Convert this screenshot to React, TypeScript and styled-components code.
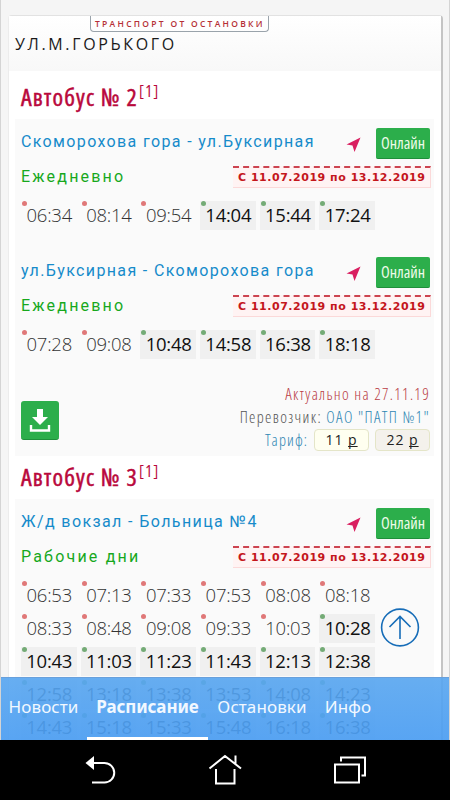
import styled, { createGlobalStyle } from "styled-components";

const GlobalStyle = createGlobalStyle`
  body {
    margin: 0;
    background: #000;
  }

  * {
    box-sizing: border-box;
  }
`;

const Screen = styled.div`
  width: 450px;
  height: 800px;
  overflow: hidden;
  display: flex;
  flex-direction: column;
  font-family: "Open Sans", "Noto Sans", sans-serif;
`;

const Viewport = styled.div`
  position: relative;
  height: 740px;
  overflow: hidden;
  padding: 15px 7px 0 7px;
  background: #f5f5f5;
  border-left: 1px solid #d4d4d4;
  border-right: 1px solid #d4d4d4;
`;

const Card = styled.main`
  width: 435px;
  height: 900px;
  background: #fff;
  border: 1px solid #e2e2e2;
  border-right: 2px solid #c4c4c4;
  border-left-color: #ececec;
  border-radius: 4px;
`;

const StopHeader = styled.header`
  height: 55px;
  display: flex;
  flex-direction: column;
  background: linear-gradient(#fff, #f8f8f8);
`;

const Badge = styled.div`
  align-self: flex-start;
  width: 179px;
  height: 16px;
  margin-left: 81px;
  padding-left: 4px;
  border: 1px solid #9aa3ab;
  border-top: 0;
  border-radius: 0 0 4px 4px;
  color: #b52f35;
  font: 600 8.5px/15px "Open Sans", sans-serif;
  letter-spacing: 2.28px;
  white-space: nowrap;
`;

const StopName = styled.h1`
  margin: 0 0 0 6px;
  font-size: 16px;
  line-height: 24px;
  font-weight: 400;
  letter-spacing: 2.65px;
  color: #1a1a1a;
`;

const RouteTitle = styled.h2<{ $height: number; $shift: number }>`
  height: ${(props) => props.$height}px;
  margin: 0;
  padding: 0 0 0 12px;
  color: #b9083b;
  font-size: 24px;
  line-height: ${(props) => props.$height + props.$shift}px;
  font-weight: 400;
  font-stretch: 75%;
  letter-spacing: 1.2px;
  white-space: nowrap;
  -webkit-text-stroke: 0.5px #b9083b;

  sup {
    margin-left: 1px;
    font-size: 16px;
    line-height: 0;
    vertical-align: 9px;
    -webkit-text-stroke: 0;
  }
`;

const Section = styled.section<{ $height: number }>`
  height: ${(props) => props.$height}px;
  margin: 0 7px 0 6px;
  padding: 9px 4px 0 6px;
  background: #fafafa;
`;

const DirectionRow = styled.div`
  height: 31px;
  display: flex;
  align-items: center;
`;

const Direction = styled.div<{ $spacing: number }>`
  flex: 1;
  padding-bottom: 3px;
  color: #168bca;
  font: 400 16px/24px Roboto, sans-serif;
  letter-spacing: ${(props) => props.$spacing}px;
  white-space: nowrap;
`;

const Arrow = styled.svg`
  width: 15px;
  height: 15px;
  margin: 2px 15px 0 0;
`;

const OnlineButton = styled.button`
  width: 54px;
  height: 31px;
  padding: 0;
  border: 0;
  border-bottom: 1px solid #1e8f3a;
  border-radius: 2px;
  background: #2cae4b;
  color: #effbe9;
  font: 400 16px/30px "Open Sans", sans-serif;
  font-stretch: 75%;
  letter-spacing: 0;
`;

const PeriodRow = styled.div`
  display: flex;
  justify-content: space-between;
  height: 42px;
  padding-top: 7px;
`;

const Days = styled.div<{ $spacing: number }>`
  color: #17a81d;
  font: 400 16px/22px Roboto, sans-serif;
  letter-spacing: ${(props) => props.$spacing}px;
`;

const Period = styled.div`
  width: 198px;
  height: 22px;
  margin-right: -1px;
  padding-left: 5px;
  border: 1px solid #fbd9d9;
  border-left: 0;
  border-top: 2px dashed #cc4450;
  background: #fff3f3;
  color: #c4161c;
  font: 700 11px/19px "DejaVu Sans", sans-serif;
  letter-spacing: 0.52px;
  white-space: nowrap;
`;

const Times = styled.div`
  display: grid;
  grid-template-columns: repeat(6, 55.5px);
  grid-auto-rows: 29px;
  gap: 3.9px 4.2px;
`;

const Time = styled.div<{ $past: boolean }>`
  position: relative;
  padding-left: 1px;
  color: ${(props) => (props.$past ? "#333" : "#111")};
  background: ${(props) => (props.$past ? "transparent" : "#f0f0f0")};
  font-size: 18.5px;
  line-height: 28px;
  font-weight: ${(props) => (props.$past ? 300 : 400)};
  letter-spacing: -0.25px;
  text-align: center;

  &:before {
    content: "";
    position: absolute;
    left: 1px;
    top: 0;
    width: 5px;
    height: 5px;
    border-radius: 50%;
    background: ${(props) => (props.$past ? "#e07878" : "#74ab76")};
  }
`;

const Summary = styled.div`
  height: 80px;
  margin: 0 7px 0 6px;
  padding: 6px 4px 0 6px;
  display: flex;
  justify-content: space-between;
  background: #fafafa;
`;

const DownloadButton = styled.button`
  width: 38px;
  height: 39px;
  margin-top: 19px;
  padding: 0;
  display: grid;
  place-items: center;
  border: 0;
  border-bottom: 1px solid #1e8f3a;
  border-radius: 3px;
  background: #2cae4b;
`;

const Facts = styled.div`
  display: flex;
  flex-direction: column;
  align-items: flex-end;
`;

const Fact = styled.div<{ $color: string; $spacing: number }>`
  height: 23px;
  display: flex;
  align-items: center;
  white-space: pre;
  color: ${(props) => props.$color};
  font-size: 16px;
  font-weight: 300;
  font-stretch: 75%;
  letter-spacing: ${(props) => props.$spacing}px;
`;

const Carrier = styled.span`
  color: #2f87b3;
`;

const Fare = styled.span<{ $background: string }>`
  width: 55px;
  height: 22px;
  margin-left: 6px;
  border: 1px solid #e4e5c8;
  border-radius: 4px;
  background: ${(props) => props.$background};
  color: #222;
  font-size: 14px;
  line-height: 20px;
  font-weight: 400;
  font-stretch: 100%;
  letter-spacing: 1px;
  text-align: center;

  u {
    text-decoration-skip-ink: none;
    text-underline-offset: 1px;
  }
`;

const TopButton = styled.button`
  position: absolute;
  left: 379px;
  top: 608px;
  width: 40px;
  height: 40px;
  padding: 0;
  border: 0;
  background: none;
`;

const Tabs = styled.nav`
  position: absolute;
  left: -1px;
  right: -1px;
  bottom: 0;
  height: 63px;
  display: flex;
  background: linear-gradient(rgba(88, 166, 240, 0.91), rgba(76, 158, 242, 0.93));
  border-top: 1px solid #68a0dc;
`;

const Tab = styled.a<{ $width: number; $active?: boolean }>`
  width: ${(props) => props.$width}px;
  height: 62px;
  border-bottom: 3px solid ${(props) => (props.$active ? "#fff" : "transparent")};
  color: #f2f8ff;
  font: ${(props) => (props.$active ? 700 : 400)} 17px/58px "Noto Sans", sans-serif;
  letter-spacing: ${(props) => (props.$active ? -0.1 : 0.1)}px;
  text-align: center;
  white-space: nowrap;
`;

const SystemBar = styled.footer`
  height: 60px;
  background: #000;

  svg {
    display: block;
  }
`;

type Slot = { time: string; past: boolean };

const slots = (past: string, next: string): Slot[] => [
  ...past.split(" ").map((time) => ({ time, past: true })),
  ...next.split(" ").map((time) => ({ time, past: false })),
];

interface ScheduleProps {
  direction: string;
  directionSpacing: number;
  days: string;
  daysSpacing: number;
  height: number;
  times: Slot[];
}

const Schedule = ({ direction, directionSpacing, days, daysSpacing, height, times }: ScheduleProps) => (
  <Section $height={height}>
    <DirectionRow>
      <Direction $spacing={directionSpacing}>{direction}</Direction>
      <Arrow viewBox="0 0 15 15">
        <path d="M14.500 0.500 L0.500 7.500 L6.500 8.500 L8.500 15 Z" fill="#d91f60" />
      </Arrow>
      <OnlineButton>Онлайн</OnlineButton>
    </DirectionRow>
    <PeriodRow>
      <Days $spacing={daysSpacing}>{days}</Days>
      <Period>С 11.07.2019 по 13.12.2019</Period>
    </PeriodRow>
    <Times>
      {times.map((slot) => (
        <Time key={slot.time} $past={slot.past}>
          {slot.time}
        </Time>
      ))}
    </Times>
  </Section>
);

const App = () => {
  return (
    <Screen>
      <GlobalStyle />
      <Viewport>
        <Card>
          <StopHeader>
            <Badge>ТРАНСПОРТ ОТ ОСТАНОВКИ</Badge>
            <StopName>УЛ.М.ГОРЬКОГО</StopName>
          </StopHeader>
          <RouteTitle $height={48} $shift={4}>
            Автобус № 2<sup>[1]</sup>
          </RouteTitle>
          <Schedule
            direction="Скоморохова гора - ул.Буксирная"
            directionSpacing={1.36}
            days="Ежедневно"
            daysSpacing={2.2}
            height={129}
            times={slots("06:34 08:14 09:54", "14:04 15:44 17:24")}
          />
          <Schedule
            direction="ул.Буксирная - Скоморохова гора"
            directionSpacing={1.36}
            days="Ежедневно"
            daysSpacing={2.2}
            height={128}
            times={slots("07:28 09:08", "10:48 14:58 16:38 18:18")}
          />
          <Summary>
            <DownloadButton>
              <svg width="22" height="24" viewBox="0 0 22 24">
                <path d="M8 1h6v8h5l-8 8-8-8h5z" fill="#fff" />
                <path d="M2 17v5.5h18V17" fill="none" stroke="#fff" strokeWidth="2.4" />
              </svg>
            </DownloadButton>
            <Facts>
              <Fact $color="#b93c45" $spacing={1.3}>Актуально на 27.11.19</Fact>
              <Fact $color="#555" $spacing={1.35}>
                Перевозчик: <Carrier>ОАО "ПАТП №1"</Carrier>
              </Fact>
              <Fact $color="#2f87b3" $spacing={1.1}>
                Тариф:
                <Fare $background="#fffff0">
                  11 <u>р</u>
                </Fare>
                <Fare $background="#f4f1ec">
                  22 <u>р</u>
                </Fare>
              </Fact>
            </Facts>
          </Summary>
          <RouteTitle $height={43} $shift={-1}>
            Автобус № 3<sup>[1]</sup>
          </RouteTitle>
          <Schedule
            direction="Ж/д вокзал - Больница №4"
            directionSpacing={1.4}
            days="Рабочие дни"
            daysSpacing={2.2}
            height={300}
            times={slots(
              "06:53 07:13 07:33 07:53 08:08 08:18 08:33 08:48 09:08 09:33 10:03",
              "10:28 10:43 11:03 11:23 11:43 12:13 12:38 12:58 13:18 13:38 13:53 14:08 14:23 14:43 15:18 15:33 15:48 16:18 16:38"
            )}
          />
        </Card>
        <TopButton>
          <svg width="40" height="40" viewBox="0 0 40 40" fill="none" stroke="#176db8" strokeWidth="1.6">
            <circle cx="20" cy="19.5" r="18.4" />
            <path d="M20 31V9M9.500 19 20 8.500 30.500 19" />
          </svg>
        </TopButton>
        <Tabs>
          <Tab $width={87}>Новости</Tab>
          <Tab $width={121} $active>
            Расписание
          </Tab>
          <Tab $width={108}>Остановки</Tab>
          <Tab $width={64}>Инфо</Tab>
        </Tabs>
      </Viewport>
      <SystemBar>
        <svg width="450" height="60" viewBox="0 0 450 60" fill="none" stroke="#fff" strokeWidth="2">
          <path d="M91 23h13.500a9.500 9.500 0 0 1 0 19.500H92" />
          <path d="M94 16v14l-8.500-7z" fill="#fff" stroke="none" />
          <path d="M209.500 28.500 225 16l16 12.500M235.500 23.500V15.500M216 29v14.500h18.500V29" />
          <path d="M335 24.500h24v18h-24zM341 21.500v-4h24v18h-3.500" />
        </svg>
      </SystemBar>
    </Screen>
  );
};

export default App;
